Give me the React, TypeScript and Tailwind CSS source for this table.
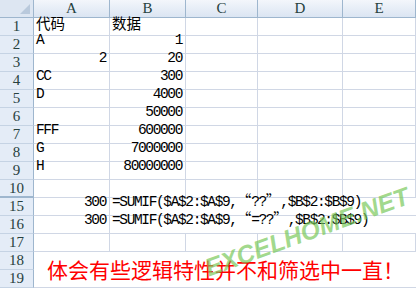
const cols = ['A', 'B', 'C', 'D', 'E']
const colW = ['w-[76px]', 'w-[76px]', 'w-[72px]', 'w-[85px]', 'w-[73px]']

type Row = { n: number; a?: string; aRight?: boolean; b?: string; thick?: boolean }

const rows: Row[] = [
  { n: 1, a: '代码', b: '数据' },
  { n: 2, a: 'A', b: '1' },
  { n: 3, a: '2', aRight: true, b: '20' },
  { n: 4, a: 'CC', b: '300' },
  { n: 5, a: 'D', b: '4000' },
  { n: 6, b: '50000' },
  { n: 7, a: 'FFF', b: '600000' },
  { n: 8, a: 'G', b: '7000000' },
  { n: 9, a: 'H', b: '80000000' },
  { n: 10, thick: true },
]

const mono = 'font-[Liberation_Mono,Noto_Sans_CJK_SC,monospace] text-[14.5px] tracking-[-1.37px] text-black'
const cjk = 'font-[Noto_Sans_CJK_SC,sans-serif] tracking-normal'
const serif = 'font-[Liberation_Serif,serif]'

function Txt({ v }: { v: string }) {
  // CJK text keeps full width, latin goes mono
  if (/[\u4e00-\u9fff]/.test(v)) return <span className={`${cjk} text-[14.5px]`}>{v}</span>
  return <span>{v}</span>
}

function RowHead({ n, thick }: { n: number; thick?: boolean }) {
  return (
    <div
      className={`w-[34px] h-[18px] shrink-0 flex items-center justify-center bg-[#e4ecf7] border-r border-[#9eb6ce] ${
        thick ? 'border-b-2 border-b-[#9eb6ce]' : 'border-b border-b-[#c5d3e4]'
      } ${serif} text-[15px] text-[#27413e] leading-none`}
    >
      {n}
    </div>
  )
}

function Cell({ w, children, right, last }: { w: string; children?: React.ReactNode; right?: boolean; last?: boolean }) {
  return (
    <div
      className={`${w} h-[18px] shrink-0 border-b border-[#d0d7e5] ${last ? '' : 'border-r'} flex items-end pb-[1px] px-[2px] overflow-visible whitespace-nowrap ${
        right ? 'justify-end pr-[3px]' : 'justify-start'
      } ${mono}`}
    >
      {children}
    </div>
  )
}

function Formula({ eq }: { eq: boolean }) {
  return (
    <span>
      =SUMIF($A$2:$A$9,<span className={`${cjk} text-[14.5px]`}>“</span>
      {eq ? '=??' : '??'}
      <span className={`${cjk} text-[14.5px]`}>”</span>,$B$2:$B$9)
    </span>
  )
}

export default function App() {
  return (
    <div className="relative w-[416px] h-[289px] overflow-hidden bg-white">
      {/* column headers */}
      <div className="flex h-[18px]">
        <div className="w-[34px] h-[18px] shrink-0 relative bg-[#dde6f2] border-r border-b border-[#9eb6ce]">
          <svg className="absolute right-[3px] bottom-[3px]" width="10" height="10" viewBox="0 0 10 10">
            <polygon points="10,0 10,10 0,10" fill="#b9c9dc" />
          </svg>
        </div>
        {cols.map((c, i) => (
          <div
            key={c}
            className={`${colW[i]} h-[18px] shrink-0 flex items-center justify-center bg-gradient-to-b from-[#f3f6fb] to-[#dbe5f2] border-b border-r border-[#9eb6ce] ${serif} text-[15px] text-[#27413e] leading-none`}
          >
            {c}
          </div>
        ))}
      </div>

      {rows.map((r) => (
        <div key={r.n} className="flex">
          <RowHead n={r.n} thick={r.thick} />
          <Cell w={colW[0]} right={r.aRight}>
            {r.a && <Txt v={r.a} />}
          </Cell>
          <Cell w={colW[1]} right={r.n !== 1}>
            {r.b && <Txt v={r.b} />}
          </Cell>
          <Cell w={colW[2]} />
          <Cell w={colW[3]} />
          <Cell w={colW[4]} />
        </div>
      ))}

      {[15, 16].map((n) => (
        <div key={n} className="flex">
          <RowHead n={n} />
          <Cell w={colW[0]} right>
            300
          </Cell>
          <div className={`w-[233px] h-[18px] shrink-0 border-b border-[#d0d7e5] flex items-end pb-[1px] pl-[2px] whitespace-nowrap overflow-visible ${mono}`}>
            <Formula eq={n === 16} />
          </div>
          <div className="w-[73px] h-[18px] shrink-0 border-b border-[#d0d7e5]" />
        </div>
      ))}

      <div className="flex">
        <RowHead n={17} />
        <Cell w={colW[0]} />
        <Cell w={colW[1]} />
        <Cell w={colW[2]} />
        <Cell w={colW[3]} />
        <Cell w={colW[4]} />
      </div>

      <div className="flex">
        <div className="flex flex-col">
          <RowHead n={18} />
          <RowHead n={19} />
        </div>
        <div className="w-[382px] h-[36px] border-b border-[#d0d7e5] flex items-center pl-[13px] font-[Noto_Sans_CJK_SC,sans-serif] text-[21px] text-[#ff0000] whitespace-nowrap">
          体会有些逻辑特性并不和筛选中一直！
        </div>
      </div>

      {/* watermark */}
      <div className="absolute left-[307px] top-[232px] -translate-x-1/2 -translate-y-1/2 rotate-[-20deg] font-[Liberation_Sans,sans-serif] font-bold italic text-[25px] text-[#78c85a]/70 whitespace-nowrap pointer-events-none leading-none">
        EXCELHOME.NET
      </div>
    </div>
  )
}
